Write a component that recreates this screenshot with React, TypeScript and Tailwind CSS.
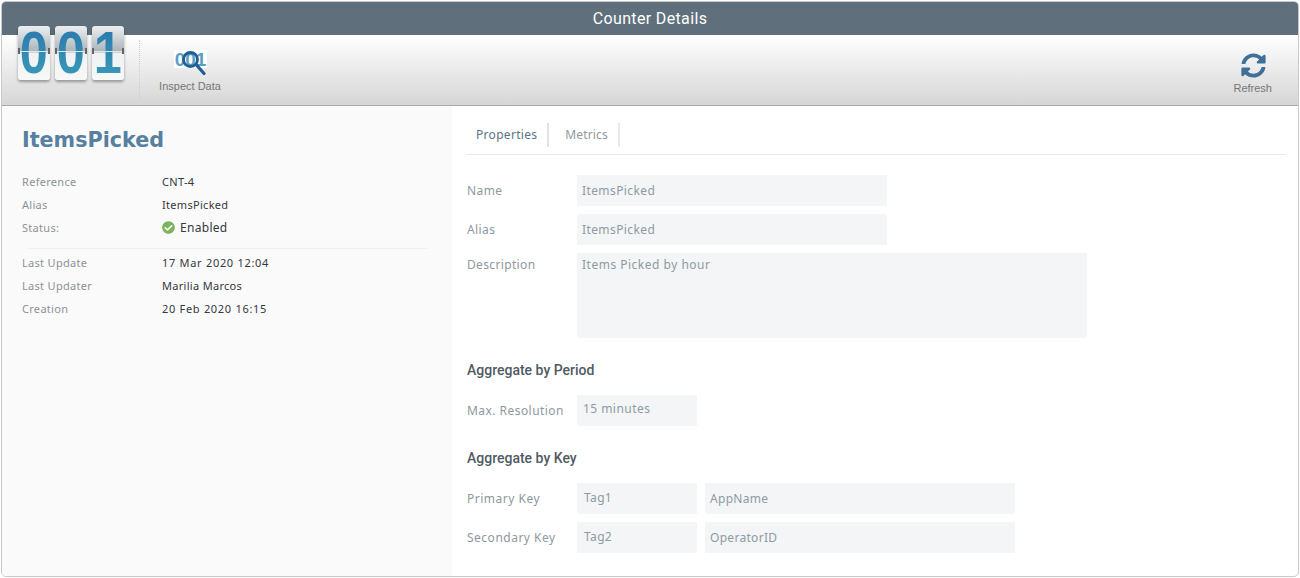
import React from 'react';
import { FaCheckCircle, FaSyncAlt } from 'react-icons/fa';

const noto = "font-['Noto_Sans',sans-serif]";

function FlipDigit({ value }: { value: string }) {
  return (
    <div className="relative flex h-[54px] w-[32px] items-center justify-center rounded-[3px] bg-[linear-gradient(to_bottom,#eceff0_0%,#a9b3b9_48%,#eef2f3_50%,#f7f8f8_100%)] shadow-[0_2px_3px_rgba(0,0,0,0.35)]">
      <span className="inline-block scale-x-[0.84] bg-gradient-to-b from-[#2a77ab] to-[#3b9cba] bg-clip-text font-['Liberation_Sans',sans-serif] text-[60px] leading-none font-bold text-transparent">
        {value}
      </span>
      <div className="absolute top-[25px] right-0 left-0 h-px bg-[#dfe6ea]" />
      <div className="absolute top-[22px] left-0 h-[6px] w-[2px] bg-[#666]" />
      <div className="absolute top-[22px] right-0 h-[6px] w-[2px] bg-[#666]" />
    </div>
  );
}

function InspectIcon() {
  return (
    <div className="relative h-[30px] w-[34px]">
      <div className="absolute top-[4px] left-[1px] flex h-[18px] w-[33px] items-center justify-center bg-white font-['Liberation_Sans',sans-serif] text-[19px] leading-none font-bold text-[#5c9fc4]">
        001
      </div>
      <svg className="absolute top-0 left-0" width="34" height="30" viewBox="0 0 34 30" fill="none">
        <circle cx="17.5" cy="13.5" r="7" stroke="#1f5f96" strokeWidth="2.8" />
        <path d="M23.5 19 L31 27.5" stroke="#1f5f96" strokeWidth="3.2" strokeLinecap="round" />
      </svg>
    </div>
  );
}

function InfoRow({ label, wide, children }: { label: string; wide?: boolean; children: React.ReactNode }) {
  return (
    <div className="flex h-[23px] items-center text-[11px]">
      <span className="w-[140px] tracking-[0.3px] text-[#8d9296]">{label}</span>
      <span className={wide ? 'tracking-[0.7px] text-[#34393d]' : 'tracking-[0.3px] text-[#34393d]'}>{children}</span>
    </div>
  );
}

function FormField({ label, value }: { label: string; value: string }) {
  return (
    <div className="flex h-[31px] items-center text-[12px] tracking-[0.4px]">
      <span className="w-[110px] text-[#8e989f]">{label}</span>
      <div className="flex h-full w-[310px] items-center bg-[#f3f5f6] px-[5px] text-[#8e9ba3]">{value}</div>
    </div>
  );
}

function KeyRow({ label, tag, name }: { label: string; tag: string; name: string }) {
  return (
    <div className="flex h-[31px] items-center text-[12px]">
      <span className="w-[110px] tracking-[0.5px] text-[#8e989f]">{label}</span>
      <div className="h-full w-[120px] rounded-[1px] bg-[#f3f5f6] px-[7px] pt-[6px] tracking-[0.35px] text-[#8e9ba3]">{tag}</div>
      <div className="ml-[8px] flex h-full w-[310px] items-center rounded-[1px] bg-[#f3f5f6] px-[5px] tracking-[0.3px] text-[#8e9ba3]">{name}</div>
    </div>
  );
}

export default function App() {
  return (
    <div className={`h-[578px] w-[1300px] overflow-hidden bg-white p-px ${noto}`}>
      <div className="flex h-full flex-col overflow-hidden rounded-[5px] border border-[#c9c9c9]">
        {/* Header */}
        <div className="flex h-[33px] shrink-0 items-center justify-center bg-[#5f6f7b] font-['Roboto',sans-serif] text-[16px] tracking-[0.35px] text-white">
          Counter Details
        </div>

        {/* Toolbar */}
        <div className="flex h-[71px] shrink-0 border-b border-[#a9a9a9] bg-gradient-to-b from-white to-[#d6d6d6] font-['Liberation_Sans',sans-serif] text-[11px] text-[#777]">
          <div className="-mt-[9px] ml-[16px] flex h-[54px] gap-[5px]">
            <FlipDigit value="0" />
            <FlipDigit value="0" />
            <FlipDigit value="1" />
          </div>
          <div className="mt-[5px] ml-[15px] h-[60px] border-l border-dotted border-[#ccc]" />
          <div className="ml-[18px] flex w-[64px] flex-col items-center pt-[11px]">
            <InspectIcon />
            <span className="mt-[2px]">Inspect Data</span>
          </div>
          <div className="mr-[26px] ml-auto flex flex-col items-center pt-[18px]">
            <FaSyncAlt size={25} className="ml-px text-[#3f7099]" />
            <span className="mt-[2px]">Refresh</span>
          </div>
        </div>

        {/* Body */}
        <div className="flex min-h-0 flex-1">
          <div className="w-[450px] shrink-0 bg-[#fafafa] pt-[19px] pr-[24px] pl-[20px]">
            <h1 className="font-['DejaVu_Sans',sans-serif] text-[20.7px] leading-[30px] font-bold text-[#55809f]">ItemsPicked</h1>
            <div className="mt-[16px]">
              <InfoRow label="Reference">CNT-4</InfoRow>
              <InfoRow label="Alias">ItemsPicked</InfoRow>
              <InfoRow label="Status:">
                <span className="flex items-center gap-[5px] pb-[2px] text-[12px]">
                  <FaCheckCircle size={13} className="text-[#7ab55c]" />
                  Enabled
                </span>
              </InfoRow>
            </div>
            <div className="mt-[8px] ml-[5px] border-t border-[#f1f1f1]" />
            <div className="mt-[3px]">
              <InfoRow label="Last Update" wide>17 Mar 2020 12:04</InfoRow>
              <InfoRow label="Last Updater">Marilia Marcos</InfoRow>
              <InfoRow label="Creation" wide>20 Feb 2020 16:15</InfoRow>
            </div>
          </div>

          <div className="flex-1 pt-[17px] pr-[12px] pl-[15px]">
            <div className="flex h-[32px] border-b border-[#e8e8e8] text-[12px] tracking-[0.3px]">
              <div className="mb-[7px] flex items-center border-r-2 border-[#e2e2e2] pr-[10px] pl-[9px] text-[#5b7488]">Properties</div>
              <div className="mb-[7px] flex items-center border-r-2 border-[#e8e8e8] pr-[10px] pl-[16px] tracking-[0.15px] text-[#92999e]">Metrics</div>
            </div>

            <div className="mt-[20px] flex flex-col gap-[8px]">
              <FormField label="Name" value="ItemsPicked" />
              <FormField label="Alias" value="ItemsPicked" />
              <div className="flex text-[12px]">
                <span className="w-[110px] pt-[3px] tracking-[0.35px] text-[#8e989f]">Description</span>
                <div className="h-[85px] w-[510px] bg-[#f3f5f6] px-[5px] pt-[3px] tracking-[0.5px] text-[#8e9ba3]">Items Picked by hour</div>
              </div>
            </div>

            <h2 className="mt-[23px] font-['Roboto',sans-serif] text-[14px] leading-[18px] font-medium text-[#4f5b63]">Aggregate by Period</h2>
            <div className="mt-[16px] flex h-[31px] items-center text-[12px] tracking-[0.45px]">
              <span className="w-[110px] text-[#8e989f]">Max. Resolution</span>
              <div className="h-full w-[120px] rounded-[1px] bg-[#f3f5f6] px-[6px] pt-[5px] text-[#8e9ba3]">15 minutes</div>
            </div>

            <h2 className="mt-[23px] font-['Roboto',sans-serif] text-[14px] leading-[18px] font-medium text-[#4f5b63]">Aggregate by Key</h2>
            <div className="mt-[16px] flex flex-col gap-[8px]">
              <KeyRow label="Primary Key" tag="Tag1" name="AppName" />
              <KeyRow label="Secondary Key" tag="Tag2" name="OperatorID" />
            </div>
          </div>
        </div>
      </div>
    </div>
  );
}
